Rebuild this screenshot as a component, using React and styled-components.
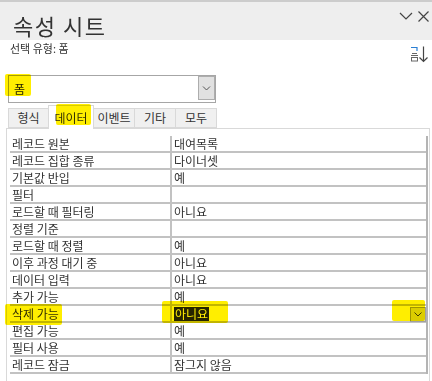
import React from "react";
import styled, { createGlobalStyle } from "styled-components";

const GlobalStyle = createGlobalStyle`
  html, body {
    margin: 0;
    padding: 0;
    background: #ffffff;
  }
  body {
    font-family: "Noto Sans CJK KR", "Noto Sans", sans-serif;
    color: #333333;
  }
  * { box-sizing: border-box; }
`;

const Sheet = styled.div`
  width: 432px;
  height: 381px;
  overflow: hidden;
  display: flex;
  flex-direction: column;
  background: #ffffff;
`;

const TitleBar = styled.div`
  height: 40px;
  flex-shrink: 0;
  background: #eeeeee;
  border-top: 2px solid #cccccc;
  display: flex;
  align-items: flex-start;
  justify-content: space-between;
  padding: 0 3px 0 13px;
`;

const Title = styled.h1`
  margin: 10px 0 0;
  font-size: 22px;
  font-weight: 400;
  line-height: 26px;
  letter-spacing: 1.5px;
  color: #333333;
`;

const WindowButtons = styled.div`
  display: flex;
  gap: 5px;
  margin-top: 9px;
  color: #444444;
`;

const SubRow = styled.div`
  height: 35px;
  flex-shrink: 0;
  display: flex;
  justify-content: space-between;
  align-items: flex-start;
  padding: 1px 3px 0 10px;
`;

const SubLabel = styled.div`
  font-size: 11px;
  line-height: 14px;
  color: #333333;
`;

const SortIcon = styled.svg`
  margin-top: 5px;
`;

const Marker = styled.span`
  position: absolute;
  left: ${p => p.$x}px;
  top: ${p => p.$y}px;
  width: ${p => p.$w}px;
  height: ${p => p.$h}px;
  background: #ffee00;
  mix-blend-mode: multiply;
  border-radius: 2px;
  pointer-events: none;
`;

const Combo = styled.div`
  position: relative;
  margin-left: 8px;
  width: 208px;
  height: 28px;
  flex-shrink: 0;
  border: 1px solid #a6a6a6;
  display: flex;
  align-items: flex-start;
`;

const ComboText = styled.div`
  flex: 1;
  padding-left: 5px;
  font-size: 12px;
  line-height: 26px;
  color: #222222;
`;

const ComboButton = styled.div`
  width: 17px;
  height: 24px;
  background: #e1e1e1;
  border: 1px solid #adadad;
  display: flex;
  align-items: center;
  justify-content: center;
  color: #555555;
`;

const TabStrip = styled.div`
  height: 23px;
  flex-shrink: 0;
  margin: 2px 0 0 8px;
  display: flex;
  align-items: flex-end;
  position: relative;
  z-index: 1;
`;

const Tab = styled.div`
  position: relative;
  width: ${p => p.$w}px;
  height: ${p => (p.$active ? 24 : 20)}px;
  margin-bottom: ${p => (p.$active ? -1 : 0)}px;
  margin-left: ${p => (p.$first ? 0 : -1)}px;
  padding-top: ${p => (p.$active ? 3 : 0)}px;
  background: ${p => (p.$active ? "#ffffff" : "#f0f0f0")};
  border: 1px solid #d9d9d9;
  border-bottom: ${p => (p.$active ? "none" : "1px solid #d9d9d9")};
  z-index: ${p => (p.$active ? 2 : 0)};
  font-size: 12px;
  line-height: 18px;
  text-align: center;
  color: #333333;
`;

const Panel = styled.div`
  flex: 1;
  margin-left: 6px;
  width: 424px;
  border: 1px solid #d9d9d9;
  border-bottom: none;
  padding: 7px 1px 0 3px;
`;

const Grid = styled.div`
  border-right: 2px solid #b4b4b4;
`;

const Row = styled.div`
  position: relative;
  height: 17px;
  display: grid;
  grid-template-columns: 162px 1fr;
  border-bottom: 2px solid #c2c2c2;
  font-size: 12px;
  line-height: 15px;
  color: #333333;
`;

const Label = styled.div`
  padding-left: 2px;
  border-right: 2px solid #c2c2c2;
  white-space: nowrap;
`;

const Value = styled.div`
  padding-left: 2px;
  display: flex;
  align-items: flex-start;
  white-space: nowrap;
`;

const Selected = styled.span`
  margin-top: 1px;
  padding: 0 1px;
  line-height: 14px;
  background: #262608;
  color: #ffffff;
`;

const CellButton = styled.div`
  margin-left: auto;
  margin-top: 1px;
  width: 16px;
  height: 15px;
  background: #dcdcdc;
  border: 1px solid #a0a0a0;
  display: flex;
  align-items: center;
  justify-content: center;
  color: #444444;
`;

const Chevron = ({ w = 8, h = 5 }) => (
  <svg width={w} height={h} viewBox="0 0 8 5">
    <path d="M0.5 0.5 L4 4 L7.5 0.5" fill="none" stroke="currentColor" strokeWidth="1" />
  </svg>
);

const tabs = [
  { label: "형식", w: 41 },
  { label: "데이터", w: 46, active: true },
  { label: "이벤트", w: 42 },
  { label: "기타", w: 42 },
  { label: "모두", w: 42 },
];

const rows = [
  ["레코드 원본", "대여목록"],
  ["레코드 집합 종류", "다이너셋"],
  ["기본값 반입", "예"],
  ["필터", ""],
  ["로드할 때 필터링", "아니요"],
  ["정렬 기준", ""],
  ["로드할 때 정렬", "예"],
  ["이후 과정 대기 중", "아니요"],
  ["데이터 입력", "아니요"],
  ["추가 가능", "예"],
  ["삭제 가능", "아니요", true],
  ["편집 가능", "예"],
  ["필터 사용", "예"],
  ["레코드 잠금", "잠그지 않음"],
];

export default function App() {
  return (
    <>
      <GlobalStyle />
      <Sheet>
        <TitleBar>
          <Title>속성 시트</Title>
          <WindowButtons>
            <svg width="14" height="10" viewBox="0 0 14 10">
              <path d="M1 2 L7 8 L13 2" fill="none" stroke="currentColor" strokeWidth="1.2" />
            </svg>
            <svg width="11" height="11" viewBox="0 0 11 11">
              <path d="M0.5 0.5 L10.5 10.5 M10.5 0.5 L0.5 10.5" fill="none" stroke="currentColor" strokeWidth="1.2" />
            </svg>
          </WindowButtons>
        </TitleBar>

        <SubRow>
          <SubLabel>선택 유형: 폼</SubLabel>
          <SortIcon width="19" height="17" viewBox="0 0 19 17">
            <path d="M1 1.5 H7 V5" fill="none" stroke="#2a7fd4" strokeWidth="1.2" />
            <path d="M2 7.5 H7" fill="none" stroke="#666" strokeWidth="1" />
            <path d="M1 9.5 H8" fill="none" stroke="#666" strokeWidth="1" />
            <rect x="1.5" y="11.5" width="6" height="3.5" fill="none" stroke="#666" strokeWidth="1" />
            <path d="M13.5 0.5 V15.5 M9.5 11.5 L13.5 15.5 L17.5 11.5" fill="none" stroke="#444" strokeWidth="1.2" />
          </SortIcon>
        </SubRow>

        <Combo>
          <ComboText>폼</ComboText>
          <ComboButton>
            <Chevron w={9} h={5} />
          </ComboButton>
          <Marker $x={-4} $y={-2} $w={26} $h={22} />
        </Combo>

        <TabStrip>
          {tabs.map((t, i) => (
            <Tab key={t.label} $w={t.w} $active={t.active} $first={i === 0}>
              {t.label}
              {t.active && <Marker $x={7} $y={-2} $w={35} $h={21} />}
            </Tab>
          ))}
        </TabStrip>

        <Panel>
          <Grid>
            {rows.map(([label, value, marked]) => (
              <Row key={label}>
                <Label>{label}</Label>
                <Value>
                  {marked ? <Selected>{value}</Selected> : value}
                  {marked && (
                    <CellButton>
                      <Chevron />
                    </CellButton>
                  )}
                </Value>
                {marked && (
                  <>
                    <Marker $x={-5} $y={-2} $w={57} $h={21} />
                    <Marker $x={152} $y={-5} $w={66} $h={22} />
                    <Marker $x={382} $y={-6} $w={33} $h={21} />
                  </>
                )}
              </Row>
            ))}
          </Grid>
        </Panel>
      </Sheet>
    </>
  );
}
